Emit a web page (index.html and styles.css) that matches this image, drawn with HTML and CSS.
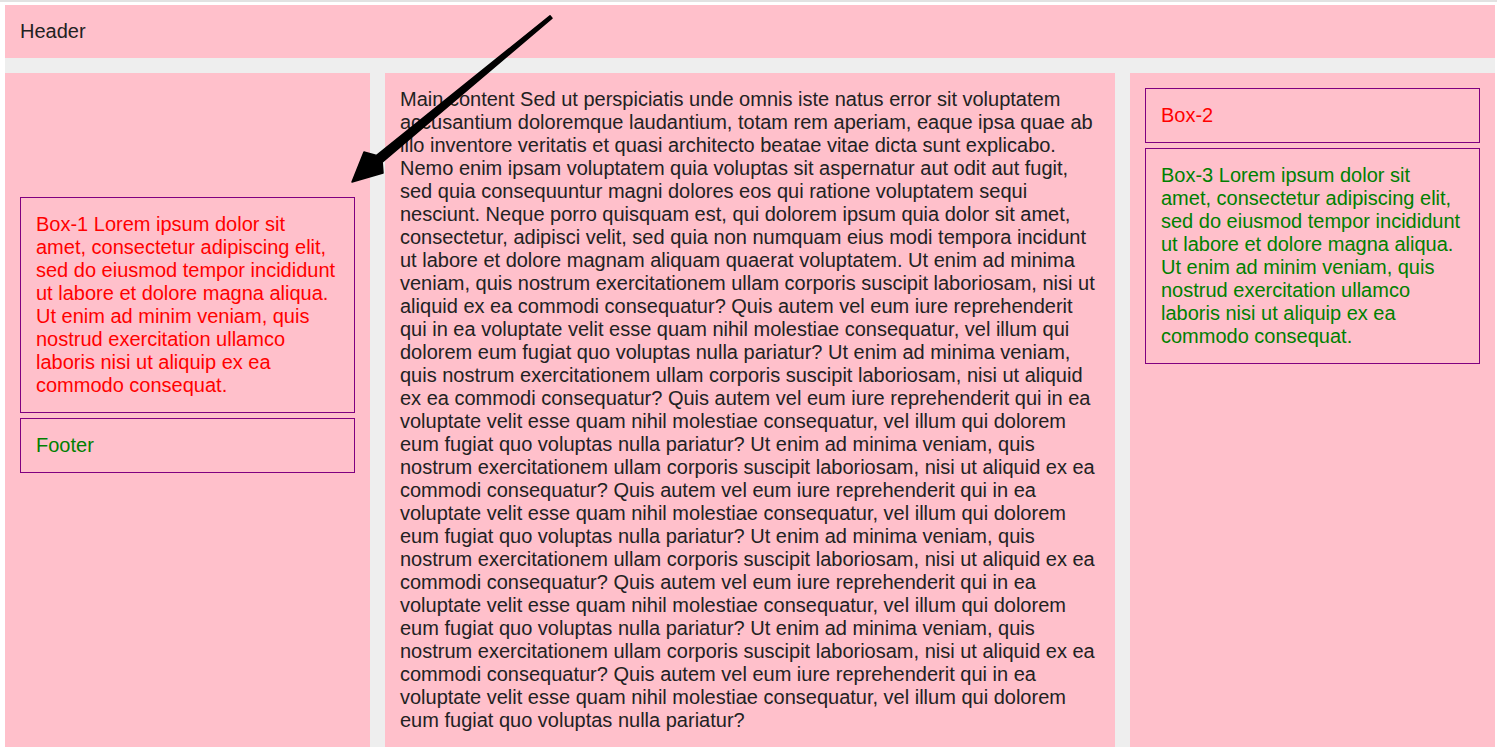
FILE: index.html
```html
<!DOCTYPE html>
<html>
<head>
<meta charset="utf-8">
<link rel="stylesheet" href="styles.css">
</head>
<body>
<div class="page">
  <header class="header">Header</header>
  <aside class="col col-left">
    <div class="box box-red box-first">Box-1 Lorem ipsum dolor sit amet, consectetur adipiscing elit, sed do eiusmod tempor incididunt ut labore et dolore magna aliqua. Ut enim ad minim veniam, quis nostrud exercitation ullamco laboris nisi ut aliquip ex ea commodo consequat.</div>
    <div class="box box-green">Footer</div>
  </aside>
  <main class="col col-main">Main content Sed ut perspiciatis unde omnis iste natus error sit voluptatem accusantium doloremque laudantium, totam rem aperiam, eaque ipsa quae ab illo inventore veritatis et quasi architecto beatae vitae dicta sunt explicabo. Nemo enim ipsam voluptatem quia voluptas sit aspernatur aut odit aut fugit, sed quia consequuntur magni dolores eos qui ratione voluptatem sequi nesciunt. Neque porro quisquam est, qui dolorem ipsum quia dolor sit amet, consectetur, adipisci velit, sed quia non numquam eius modi tempora incidunt ut labore et dolore magnam aliquam quaerat voluptatem. Ut enim ad minima veniam, quis nostrum exercitationem ullam corporis suscipit laboriosam, nisi ut aliquid ex ea commodi consequatur? Quis autem vel eum iure reprehenderit qui in ea voluptate velit esse quam nihil molestiae consequatur, vel illum qui dolorem eum fugiat quo voluptas nulla pariatur? Ut enim ad minima veniam, quis nostrum exercitationem ullam corporis suscipit laboriosam, nisi ut aliquid ex ea commodi consequatur? Quis autem vel eum iure reprehenderit qui in ea voluptate velit esse quam nihil molestiae consequatur, vel illum qui dolorem eum fugiat quo voluptas nulla pariatur? Ut enim ad minima veniam, quis nostrum exercitationem ullam corporis suscipit laboriosam, nisi ut aliquid ex ea commodi consequatur? Quis autem vel eum iure reprehenderit qui in ea voluptate velit esse quam nihil molestiae consequatur, vel illum qui dolorem eum fugiat quo voluptas nulla pariatur? Ut enim ad minima veniam, quis nostrum exercitationem ullam corporis suscipit laboriosam, nisi ut aliquid ex ea commodi consequatur? Quis autem vel eum iure reprehenderit qui in ea voluptate velit esse quam nihil molestiae consequatur, vel illum qui dolorem eum fugiat quo voluptas nulla pariatur? Ut enim ad minima veniam, quis nostrum exercitationem ullam corporis suscipit laboriosam, nisi ut aliquid ex ea commodi consequatur? Quis autem vel eum iure reprehenderit qui in ea voluptate velit esse quam nihil molestiae consequatur, vel illum qui dolorem eum fugiat quo voluptas nulla pariatur?</main>
  <aside class="col col-right">
    <div class="box box-red">Box-2</div>
    <div class="box box-green">Box-3 Lorem ipsum dolor sit amet, consectetur adipiscing elit, sed do eiusmod tempor incididunt ut labore et dolore magna aliqua. Ut enim ad minim veniam, quis nostrud exercitation ullamco laboris nisi ut aliquip ex ea commodo consequat.</div>
  </aside>
</div>
<svg class="arrow" width="1497" height="755" viewBox="0 0 1497 755" xmlns="http://www.w3.org/2000/svg">
  <polygon fill="#000" stroke="#000" stroke-width="1.5" stroke-linejoin="round"
    points="552,18.2 550,15.8 376.6,155.4 364,152 352,182 383,173 382.2,162.2"/>
</svg>
</body>
</html>
```
FILE: styles.css
```css
html {
  margin: 0;
  padding: 0;
  border-top: 2px solid #e2e2e2;
  background: #fff;
}
body {
  margin: 0;
  padding: 3px 0 8px 5px;
  font-family: "Liberation Sans", Arial, sans-serif;
  font-size: 20px;
  line-height: 23px;
  position: relative;
}
.page {
  width: 1490px;
  background: #eeeeee;
  display: grid;
  grid-template-columns: 1fr 2fr 1fr;
  column-gap: 15px;
  row-gap: 15px;
}
.header {
  grid-column: 1 / 4;
  background: #ffc0cb;
  padding: 15px;
  color: #222;
}
.col {
  background: #ffc0cb;
  padding: 15px;
  display: flex;
  flex-direction: column;
  gap: 5px;
}
.col-main {
  display: block;
  color: #222;
}
.box {
  border: 1px solid #800080;
  padding: 15px;
}
.box-first {
  margin-top: 109px;
}
.box-red { color: #ff0000; }
.box-green { color: #008000; }
.arrow {
  position: absolute;
  left: 0;
  top: -2px;
  pointer-events: none;
}
```
